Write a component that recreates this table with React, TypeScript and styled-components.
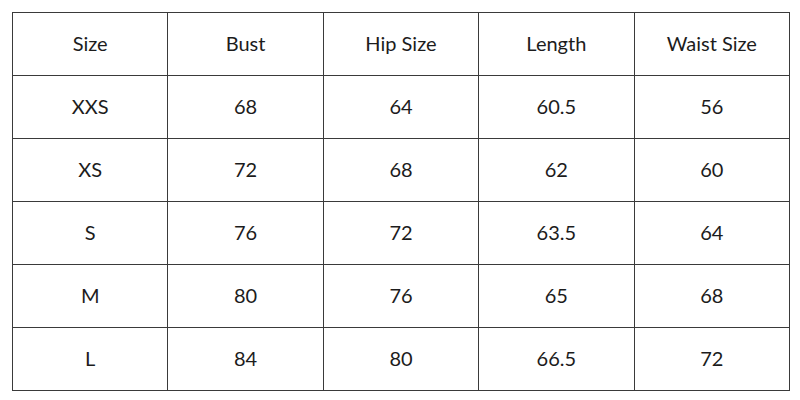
import styled, {createGlobalStyle} from "styled-components";

const GlobalStyle = createGlobalStyle`
    body {
        margin: 0;
        background: #ffffff;
        font-family: Lato, "Open Sans", sans-serif;
    }
`

type RowType = {
    size: string
    bust: string
    hip: string
    length: string
    waist: string
}

const headers = ["Size", "Bust", "Hip Size", "Length", "Waist Size"]

const rows: RowType[] = [
    {size: "XXS", bust: "68", hip: "64", length: "60.5", waist: "56"},
    {size: "XS", bust: "72", hip: "68", length: "62", waist: "60"},
    {size: "S", bust: "76", hip: "72", length: "63.5", waist: "64"},
    {size: "M", bust: "80", hip: "76", length: "65", waist: "68"},
    {size: "L", bust: "84", hip: "80", length: "66.5", waist: "72"},
]

export default function App() {
    return (
        <Page>
            <GlobalStyle/>
            <Table>
                <tbody>
                <tr>
                    {headers.map(h => <Cell key={h}>{h}</Cell>)}
                </tr>
                {rows.map(r => (
                    <tr key={r.size}>
                        <Cell>{r.size}</Cell>
                        <Cell>{r.bust}</Cell>
                        <Cell>{r.hip}</Cell>
                        <Cell>{r.length}</Cell>
                        <Cell>{r.waist}</Cell>
                    </tr>
                ))}
                </tbody>
            </Table>
        </Page>
    );
}

const Page = styled.div`
    padding: 12px 0 0 12px;
`

const Table = styled.table`
    border-collapse: collapse;
    table-layout: fixed;
    width: 778px;
`

const Cell = styled.td`
    border: 1px solid #3a3a3a;
    height: 60px;
    padding: 0 0 2px;
    text-align: center;
    vertical-align: middle;
    font-size: 20px;
    line-height: 20px;
    font-weight: 400;
    color: #1c1c1c;
`
